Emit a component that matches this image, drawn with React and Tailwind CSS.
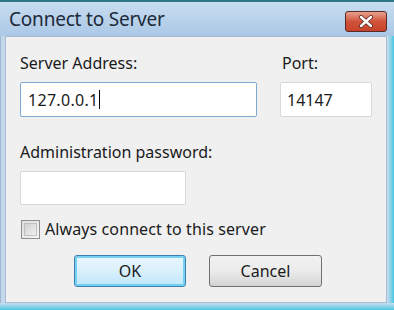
export default function App() {
  const font = { fontFamily: '"Noto Sans", "Open Sans", sans-serif' };
  return (
    <div className="w-[394px] h-[310px] flex flex-col bg-gradient-to-b from-[#c2d8ee] to-[#b3cde8] overflow-hidden" style={font}>
      <div className="h-[2px] bg-[#2d7884]" />
      <div className="h-[34px] flex items-center justify-between pl-[9px] pr-[7px] bg-gradient-to-b from-[#c7dcf0] to-[#abc8e6]">
        <span className="text-[19px] text-[#1c2a3a] leading-none tracking-[-0.2px]">Connect to Server</span>
        <div className="w-[42px] h-[21px] rounded-[3px] border border-[#5a2a24] bg-gradient-to-b from-[#e8a18f] via-[#d0523a] to-[#c8432c] flex items-center justify-center mt-[4px]">
          <svg width="16" height="13" viewBox="0 0 16 13">
            <path d="M3 2 L13 11 M13 2 L3 11" stroke="#5a2a24" strokeWidth="4" strokeLinecap="round" />
            <path d="M3 2 L13 11 M13 2 L3 11" stroke="#ffffff" strokeWidth="2.4" strokeLinecap="round" />
          </svg>
        </div>
      </div>
      <div className="flex-1 flex">
        <div className="w-[5px] bg-[#c4d8ec] border-l border-[#9fb8d2]" />
        <div className="flex-1 bg-[#f0f0f0] border border-[#a8bdd3] flex flex-col pl-[14px] pt-[16px]">
          <div className="flex gap-[23px]">
            <div className="flex flex-col">
              <span className="text-[16px] text-[#1a1a1a] leading-[20px]">Server Address:</span>
              <div className="mt-[9px] w-[237px] h-[35px] bg-white border border-[#7fa7cf] rounded-[2px] flex items-center pl-[7px]">
                <span className="text-[16px] text-[#1a1a1a] tracking-[0.3px]">127.0.0.1</span>
                <span className="w-[1px] h-[19px] bg-black ml-[1px]" />
              </div>
            </div>
            <div className="flex flex-col">
              <span className="text-[16px] text-[#1a1a1a] leading-[20px] pl-[2px]">Port:</span>
              <div className="mt-[9px] w-[92px] h-[35px] bg-white border border-[#d5d9de] rounded-[2px] flex items-center pl-[6px]">
                <span className="text-[16px] text-[#1a1a1a]">14147</span>
              </div>
            </div>
          </div>
          <span className="mt-[25px] text-[16px] text-[#1a1a1a] leading-[20px]">Administration password:</span>
          <div className="mt-[9px] w-[166px] h-[34px] bg-white border border-[#d5d9de] rounded-[2px]" />
          <div className="mt-[14px] flex items-center">
            <div className="w-[19px] h-[19px] border border-[#8e8f8f] bg-gradient-to-br from-[#dcdcdc] to-[#f7f7f7] p-[2px] ml-[1px]">
              <div className="w-full h-full border border-[#c0c0c0] bg-gradient-to-br from-[#cfcfcf] to-[#f2f2f2]" />
            </div>
            <span className="ml-[5px] text-[16px] text-[#1a1a1a] leading-[20px] tracking-[0.1px]">Always connect to this server</span>
          </div>
          <div className="mt-[16px] flex pl-[54px] gap-[23px]">
            <div className="w-[112px] h-[32px] rounded-[3px] border border-[#3c7fb1] shadow-[inset_0_0_0_2px_#74d1f1] bg-gradient-to-b from-[#eaf6fd] via-[#d9f0fc] to-[#bee6fd] flex items-center justify-center">
              <span className="text-[16px] text-[#1a1a1a]">OK</span>
            </div>
            <div className="w-[113px] h-[32px] rounded-[3px] border border-[#707070] bg-gradient-to-b from-[#f2f2f2] via-[#ebebeb] to-[#d4d4d4] flex items-center justify-center">
              <span className="text-[16px] text-[#1a1a1a]">Cancel</span>
            </div>
          </div>
        </div>
        <div className="w-[7px] bg-gradient-to-r from-[#c9dcef] to-[#3fc6e0]" />
      </div>
      <div className="h-[7px] bg-gradient-to-b from-[#c9dcef] to-[#3fc6e0]" />
    </div>
  );
}
